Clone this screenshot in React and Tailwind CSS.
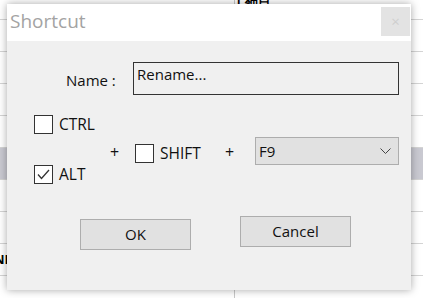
const rows = [
  { h: "h-[20px]" },
  { h: "h-[32px]" },
  { h: "h-[32px]" },
  { h: "h-[32px]" },
  { h: "h-[32px]" },
  { h: "h-[32px]", sel: true },
  { h: "h-[32px]" },
  { h: "h-[32px]" },
  { h: "h-[32px]", text: "NI" },
  { h: "h-[32px]" },
];

function Checkbox({ checked, label }) {
  return (
    <div className="flex items-center leading-[19px]">
      <div className="w-[19px] h-[19px] bg-white border border-[#333] flex items-center justify-center">
        {checked && (
          <svg width="13" height="11" viewBox="0 0 13 11">
            <path d="M1 5.5 L4.5 9.5 L12 1" fill="none" stroke="#333" strokeWidth="1.3" />
          </svg>
        )}
      </div>
      <span className="ml-[6px] text-[15.5px]">{label}</span>
    </div>
  );
}

export default function App() {
  return (
    <div className="relative w-[423px] h-[298px] overflow-hidden bg-white" style={{ fontFamily: '"Open Sans", "Noto Sans", sans-serif' }}>
      {/* background table */}
      <div className="flex flex-col">
        {rows.map((r, i) => (
          <div
            key={i}
            className={`${r.h} border-b border-[#d4d4d4] flex ${r.sel ? "bg-[#c9c9d1]" : ""}`}
          >
            <div className="w-[235px] border-r border-[#c8c8c8] flex items-center text-[13px] font-bold text-black">
              {r.text && <span className="-ml-[6px]">{r.text}</span>}
            </div>
            <div className="flex-1 text-[13px] font-bold leading-none pl-[2px] -mt-[6px] whitespace-nowrap">
              {i === 0 && "[ 細目"}
            </div>
          </div>
        ))}
      </div>

      {/* dialog */}
      <div className="absolute left-[7px] top-[4px] w-[404px] h-[286px] bg-[#f0f0f0] shadow-[0_0_8px_rgba(0,0,0,0.35)] flex flex-col text-[15px] text-[#111]">
        <div className="h-[37px] bg-white flex justify-between items-start">
          <span className="pl-[3px] pt-[5px] text-[19px] text-[#a3a3a3] leading-[24px]">Shortcut</span>
          <div className="mt-[3px] mr-[1px] w-[29px] h-[29px] bg-[#e3e3e3] flex items-center justify-center text-[#cfcfcf] text-[15px]">
            ×
          </div>
        </div>

        <div className="pt-[21px] flex flex-col">
          <div className="flex items-center h-[33px]">
            <span className="w-[126px] pl-[59px] pt-[3px]">Name :</span>
            <div className="w-[266px] h-[33px] border border-[#333] pl-[3px] leading-[22px]">Rename...</div>
          </div>

          <div className="mt-[20px] h-[69px] flex items-center pl-[27px]">
            <div className="w-[76px] h-[69px] flex flex-col justify-between">
              <Checkbox label="CTRL" />
              <Checkbox checked label="ALT" />
            </div>
            <span className="w-[9px] mt-[5px] text-[16px] text-center">+</span>
            <div className="ml-[16px] mt-[8px] w-[90px]">
              <Checkbox label="SHIFT" />
            </div>
            <span className="w-[9px] mt-[5px] text-[16px] text-center">+</span>
            <div className="ml-[21px] mt-[3px] w-[144px] h-[28px] bg-[#e1e1e1] border border-[#adadad] flex items-center justify-between pl-[3px] pr-[7px]">
              <span>F9</span>
              <svg width="11" height="6" viewBox="0 0 11 6">
                <path d="M0.5 0.5 L5.5 5.5 L10.5 0.5" fill="none" stroke="#444" strokeWidth="1" />
              </svg>
            </div>
          </div>

          <div className="mt-[32px] flex items-start pl-[73px]">
            <div className="mt-[3px] w-[111px] h-[31px] bg-[#e1e1e1] border border-[#adadad] flex items-center justify-center">
              OK
            </div>
            <div className="ml-[49px] w-[111px] h-[31px] bg-[#e1e1e1] border border-[#adadad] flex items-center justify-center">
              Cancel
            </div>
          </div>
        </div>
      </div>
    </div>
  );
}
